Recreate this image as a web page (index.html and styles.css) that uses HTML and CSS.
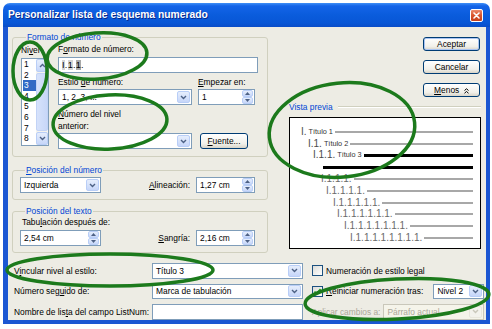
FILE: index.html
```html
<!DOCTYPE html>
<html lang="es">
<head>
    <meta charset="UTF-8">
    <meta name="viewport" content="width=device-width, initial-scale=1.0">
    <title>Personalizar lista de esquema numerado</title>
    <link rel="stylesheet" href="styles.css">
</head>
<body>
    <div class="window">
        <div class="titlebar">
            <span class="title">Personalizar lista de esquema numerado</span>
            <span class="close">
                <svg width="7" height="7" viewBox="0 0 7 7"><path d="M1 1l5 5M6 1l-5 5" stroke="#fff" stroke-width="1.6" stroke-linecap="round"/></svg>
            </span>
        </div>

        <div class="client">
            <div class="top">
                <div class="left">
                    <!-- Formato de número -->
                    <fieldset class="group g-formato">
                        <legend>Formato de número</legend>
                        <div class="formato">
                            <div class="nivel">
                                <div class="lbl">Ni<u>v</u>el</div>
                                <div class="listbox">
                                    <div class="items">
                                        <div>1</div>
                                        <div>2</div>
                                        <div class="sel">3</div>
                                        <div>4</div>
                                        <div>5</div>
                                        <div>6</div>
                                        <div>7</div>
                                        <div>8</div>
                                    </div>
                                    <div class="vscroll">
                                        <span class="sbtn"><svg width="7" height="5" viewBox="0 0 7 5"><path d="M1 4l2.5-2.5L6 4" fill="none" stroke="#4D6185" stroke-width="1.4"/></svg></span>
                                        <span class="thumb"></span>
                                        <span class="sbtn"><svg width="7" height="5" viewBox="0 0 7 5"><path d="M1 1l2.5 2.5L6 1" fill="none" stroke="#4D6185" stroke-width="1.4"/></svg></span>
                                    </div>
                                </div>
                            </div>

                            <div class="fields">
                                <div class="lbl">F<u>o</u>rmato de número:</div>
                                <div class="input fmt"><span class="fld">I</span>.<span class="fld">1</span>.<span class="fld cur">1</span>.</div>

                                <div class="frow r2">
                                    <div class="col-a">
                                        <div class="lbl">Estilo <u>d</u>e número:</div>
                                        <div class="combo">
                                            <span class="val">1, 2, 3, ...</span>
                                            <span class="drop"><svg width="7" height="5" viewBox="0 0 7 5"><path d="M1 1l2.5 2.5L6 1" fill="none" stroke="#4D6185" stroke-width="1.4"/></svg></span>
                                        </div>
                                    </div>
                                    <div class="col-b">
                                        <div class="lbl"><u>E</u>mpezar en:</div>
                                        <div class="spin">
                                            <span class="val">1</span>
                                            <span class="arrows">
                                                <span class="ar"><svg width="5" height="3" viewBox="0 0 5 3"><path d="M0 3h5L2.5 0z" fill="#4D6185"/></svg></span>
                                                <span class="ar"><svg width="5" height="3" viewBox="0 0 5 3"><path d="M0 0h5L2.5 3z" fill="#4D6185"/></svg></span>
                                            </span>
                                        </div>
                                    </div>
                                </div>

                                <div class="frow r3">
                                    <div class="col-a">
                                        <div class="lbl two"><u>N</u>úmero del nivel<br>anterior:</div>
                                        <div class="combo">
                                            <span class="val"></span>
                                            <span class="drop"><svg width="7" height="5" viewBox="0 0 7 5"><path d="M1 1l2.5 2.5L6 1" fill="none" stroke="#4D6185" stroke-width="1.4"/></svg></span>
                                        </div>
                                    </div>
                                    <button class="btn fuente"><u>F</u>uente...</button>
                                </div>
                            </div>
                        </div>
                    </fieldset>

                    <!-- Posición del número -->
                    <fieldset class="group g-numero">
                        <legend><u>P</u>osición del número</legend>
                        <div class="prow">
                            <div class="combo izq">
                                <span class="val">Izquierda</span>
                                <span class="drop"><svg width="7" height="5" viewBox="0 0 7 5"><path d="M1 1l2.5 2.5L6 1" fill="none" stroke="#4D6185" stroke-width="1.4"/></svg></span>
                            </div>
                            <span class="side-lbl"><u>A</u>lineación:</span>
                            <div class="spin cm">
                                <span class="val">1,27 cm</span>
                                <span class="arrows">
                                    <span class="ar"><svg width="5" height="3" viewBox="0 0 5 3"><path d="M0 3h5L2.5 0z" fill="#4D6185"/></svg></span>
                                    <span class="ar"><svg width="5" height="3" viewBox="0 0 5 3"><path d="M0 0h5L2.5 3z" fill="#4D6185"/></svg></span>
                                </span>
                            </div>
                        </div>
                    </fieldset>

                    <!-- Posición del texto -->
                    <fieldset class="group g-texto">
                        <legend>Posición del texto</legend>
                        <div class="prow">
                            <div class="tab-col">
                                <div class="lbl">Tabu<u>l</u>ación después de:</div>
                                <div class="spin izq">
                                    <span class="val">2,54 cm</span>
                                    <span class="arrows">
                                        <span class="ar"><svg width="5" height="3" viewBox="0 0 5 3"><path d="M0 3h5L2.5 0z" fill="#4D6185"/></svg></span>
                                        <span class="ar"><svg width="5" height="3" viewBox="0 0 5 3"><path d="M0 0h5L2.5 3z" fill="#4D6185"/></svg></span>
                                    </span>
                                </div>
                            </div>
                            <span class="side-lbl low"><u>S</u>angría:</span>
                            <div class="spin cm low">
                                <span class="val">2,16 cm</span>
                                <span class="arrows">
                                    <span class="ar"><svg width="5" height="3" viewBox="0 0 5 3"><path d="M0 3h5L2.5 0z" fill="#4D6185"/></svg></span>
                                    <span class="ar"><svg width="5" height="3" viewBox="0 0 5 3"><path d="M0 0h5L2.5 3z" fill="#4D6185"/></svg></span>
                                </span>
                            </div>
                        </div>
                    </fieldset>
                </div>

                <div class="right">
                    <div class="buttons">
                        <button class="btn default">Aceptar</button>
                        <button class="btn">Cancelar</button>
                        <button class="btn"><u>M</u>enos&nbsp;&nbsp;<svg class="menos" width="5" height="6" viewBox="0 0 5 6"><path d="M0.5 2.5L2.5 0.8 4.5 2.5M0.5 5.2L2.5 3.5 4.5 5.2" fill="none" stroke="#000" stroke-width="1"/></svg></button>
                    </div>

                    <div class="vp-head">
                        <span>Vista previa</span>
                        <span class="rule"></span>
                    </div>
                    <div class="preview">
                        <div class="pv l1"><span class="num dark">I.</span><span class="tit">Título 1</span><span class="line"></span></div>
                        <div class="pv l2"><span class="num dark">I.1.</span><span class="tit">Título 2</span><span class="line"></span></div>
                        <div class="pv l3"><span class="num dark">I.1.1.</span><span class="tit">Título 3</span><span class="line black"></span></div>
                        <div class="pv l4"><span class="line black"></span></div>
                        <div class="pv l5"><span class="num">I.1.1.1.</span><span class="line"></span></div>
                        <div class="pv l6"><span class="num">I.1.1.1.1.</span><span class="line"></span></div>
                        <div class="pv l7"><span class="num">I.1.1.1.1.1.</span><span class="line"></span></div>
                        <div class="pv l8"><span class="num">I.1.1.1.1.1.1.</span><span class="line"></span></div>
                        <div class="pv l9"><span class="num">I.1.1.1.1.1.1.1.</span><span class="line"></span></div>
                        <div class="pv l10"><span class="num">I.1.1.1.1.1.1.1.1.</span><span class="line"></span></div>
                    </div>
                </div>
            </div>

            <div class="bottom">
                <span class="blbl">V<u>i</u>ncular nivel al estilo:</span>
                <div class="combo">
                    <span class="val">Título 3</span>
                    <span class="drop"><svg width="7" height="5" viewBox="0 0 7 5"><path d="M1 1l2.5 2.5L6 1" fill="none" stroke="#4D6185" stroke-width="1.4"/></svg></span>
                </div>
                <div class="bright">
                    <span class="check"></span>
                    <span>Numeración de estilo legal</span>
                </div>

                <span class="blbl">Número seg<u>u</u>ido de:</span>
                <div class="combo">
                    <span class="val">Marca de tabulación</span>
                    <span class="drop"><svg width="7" height="5" viewBox="0 0 7 5"><path d="M1 1l2.5 2.5L6 1" fill="none" stroke="#4D6185" stroke-width="1.4"/></svg></span>
                </div>
                <div class="bright">
                    <span class="check on"><svg width="9" height="9" viewBox="0 0 9 9"><path d="M1.5 4.5l2 2 4-4.5" fill="none" stroke="#21A121" stroke-width="1.6"/></svg></span>
                    <span><u>R</u>einiciar numeración tras:</span>
                    <div class="combo nivel2">
                        <span class="val">Nivel 2</span>
                        <span class="drop"><svg width="7" height="5" viewBox="0 0 7 5"><path d="M1 1l2.5 2.5L6 1" fill="none" stroke="#4D6185" stroke-width="1.4"/></svg></span>
                    </div>
                </div>

                <span class="blbl">Nombre de lis<u>t</u>a del campo ListNum:</span>
                <div class="input"></div>
                <div class="bright">
                    <span class="disabled">Aplicar cambios a:</span>
                    <div class="combo off">
                        <span class="val">Párrafo actual</span>
                        <span class="drop"><svg width="7" height="5" viewBox="0 0 7 5"><path d="M1 1l2.5 2.5L6 1" fill="none" stroke="#C9C7BA" stroke-width="1.4"/></svg></span>
                    </div>
                </div>
            </div>
        </div>
    </div>

    <!-- marcas verdes de anotación -->
    <svg class="marks" width="492" height="329" viewBox="0 0 492 329">
        <g fill="none" stroke="#1C7A1C" stroke-width="3.5">
            <ellipse cx="30" cy="71" rx="17" ry="29"/>
            <ellipse cx="97" cy="56" rx="50" ry="23" transform="rotate(-4 97 56)"/>
            <ellipse cx="110" cy="122" rx="57" ry="27" transform="rotate(-3 110 122)"/>
            <ellipse cx="342" cy="130" rx="73" ry="47" transform="rotate(-6 342 130)"/>
            <ellipse cx="110" cy="270" rx="103" ry="16"/>
            <ellipse cx="397" cy="299" rx="92" ry="20" transform="rotate(-3 397 299)"/>
        </g>
    </svg>
</body>
</html>
```

FILE: styles.css
```css
* {
    box-sizing: border-box;
}

body {
    margin: 0;
    background-color: #fff;
    font-family: 'Liberation Sans', Arial, sans-serif;
    font-size: 8.4px;
    line-height: 10px;
    color: #000;
}

u {
    text-decoration-thickness: 1px;
    text-underline-offset: 1px;
}

.window {
    margin: 3px 0 0 3px;
    width: 487px;
    height: 321px;
    padding: 0 4px 4px 5px;
    border-radius: 7px 7px 0 0;
    background: linear-gradient(#3f8ff6 0, #1464e8 3px, #0a5cdc 12px, #0856d6 20px, #0a4cc8 24px, #1b56d2 24px);
}

.titlebar {
    height: 24px;
    display: flex;
    align-items: center;
    justify-content: space-between;
    padding-right: 3px;
}

.title {
    color: #fff;
    font-weight: bold;
    font-size: 10.3px;
    text-shadow: 1px 1px 0 #0b2a8a;
}

.close {
    width: 13px;
    height: 13px;
    border: 1px solid #fff;
    border-radius: 2px;
    background: linear-gradient(#ec8a6c, #d8532c 50%, #c4401c);
    display: flex;
    align-items: center;
    justify-content: center;
}

.client {
    height: 293px;
    background-color: #edece4;
    padding-top: 5px;
}

.top {
    display: flex;
    padding-left: 4px;
}

.left {
    width: 256px;
}

/* group boxes */
.group {
    margin: 0;
    padding: 0;
    border: 1px solid #d0d0bf;
    border-radius: 3px;
    min-width: 0;
}

.group legend {
    margin-left: 5px;
    padding: 0 1px;
    color: #0046d5;
    line-height: 10px;
}

.lbl {
    white-space: nowrap;
}

.lbl.two {
    line-height: 12px;
}

/* controls */
.input, .combo, .spin {
    height: 16px;
    border: 1px solid #7f9db9;
    background-color: #fff;
    display: flex;
    align-items: center;
}

.input {
    padding-left: 3px;
}

.val {
    flex: 1;
    padding-left: 3px;
    white-space: nowrap;
    overflow: hidden;
}

.drop {
    width: 13px;
    height: 12px;
    margin-right: 1px;
    border: 1px solid #b9cef7;
    border-radius: 2px;
    background: linear-gradient(#e6eefc, #c6d6f9);
    display: flex;
    align-items: center;
    justify-content: center;
}

.arrows {
    width: 11px;
    height: 14px;
    display: flex;
    flex-direction: column;
    margin-right: 1px;
}

.ar {
    flex: 1;
    border: 1px solid #b9cef7;
    border-radius: 2px;
    background: linear-gradient(#e6eefc, #c6d6f9);
    display: flex;
    align-items: center;
    justify-content: center;
}

.btn {
    font: inherit;
    line-height: 12px;
    color: #000;
    height: 14px;
    padding: 0;
    border: 1px solid #003c74;
    border-radius: 3px;
    background: linear-gradient(#fff, #f1f0ea 70%, #d8d4c8);
    text-align: center;
    white-space: nowrap;
}

.btn.default {
    box-shadow: inset 0 0 0 1px #a9c4f2;
}

.btn .menos {
    vertical-align: -1px;
}

/* formato de número */
.g-formato {
    padding: 0 0 7px 8px;
}

.formato {
    display: flex;
    gap: 9px;
    padding-top: 2px;
}

.nivel .lbl {
    margin-top: 1px;
}

.listbox {
    margin-top: 3px;
    width: 28px;
    height: 88px;
    border: 1px solid #7f9db9;
    background-color: #fff;
    display: flex;
    overflow: hidden;
}

.items {
    width: 14px;
    padding-left: 1px;
}

.items div {
    height: 10.6px;
    line-height: 10.6px;
    padding-left: 1px;
}

.items .sel {
    background-color: #316ac5;
    color: #fff;
}

.vscroll {
    width: 12px;
    display: flex;
    flex-direction: column;
    background-color: #f4f3ee;
}

.sbtn {
    height: 13px;
    border: 1px solid #b9cef7;
    border-radius: 2px;
    background: linear-gradient(#e6eefc, #c6d6f9);
    display: flex;
    align-items: center;
    justify-content: center;
}

.thumb {
    flex: 1;
    margin: 1px 0;
    border: 1px solid #c2d3f6;
    border-radius: 2px;
    background: linear-gradient(90deg, #d6e2fb, #c8d7f8);
}

.fields {
    width: 200px;
}

.input.fmt {
    margin-top: 3px;
    font-size: 9px;
    letter-spacing: 0.3px;
}

.fld {
    background-color: #d4d4d4;
}

.fld.cur {
    background-color: #a8a8a8;
}

.frow {
    display: flex;
    align-items: flex-end;
}

.frow.r2 {
    margin-top: 4px;
    gap: 6px;
}

.frow.r3 {
    margin-top: 3px;
    gap: 8px;
}

.col-a {
    width: 134px;
}

.col-b {
    width: 57px;
}

.col-a .combo, .col-b .spin {
    margin-top: 2px;
}

.r3 .col-a .combo {
    margin-top: 1px;
}

.fuente {
    width: 48px;
    height: 16px;
    line-height: 14px;
}

/* posición del número / del texto */
.g-numero {
    margin-top: 8px;
    padding: 2px 12px 6px 7px;
}

.g-texto {
    margin-top: 6px;
    padding: 1px 12px 6px 7px;
}

.prow {
    display: flex;
    align-items: center;
}

.izq {
    width: 81px;
}

.side-lbl {
    margin-left: auto;
    margin-right: 6px;
}

.spin.cm {
    width: 59px;
}

.g-texto .prow {
    align-items: flex-end;
}

.g-texto .lbl {
    padding-left: 2px;
}

.g-texto .spin {
    margin-top: 3px;
}

.side-lbl.low {
    line-height: 16px;
}

/* right column */
.right {
    width: 192px;
    margin-left: 21px;
    padding-top: 5px;
}

.buttons {
    display: flex;
    flex-direction: column;
    align-items: flex-end;
    gap: 9px;
    padding-right: 1px;
}

.buttons .btn {
    width: 57px;
}

.vp-head {
    margin-top: 5px;
    display: flex;
    align-items: center;
    gap: 5px;
    color: #0046d5;
}

.rule {
    flex: 1;
    height: 2px;
    border-top: 1px solid #d0d0bf;
    border-bottom: 1px solid #fff;
}

.preview {
    margin-top: 5px;
    height: 132px;
    border: 1px solid #000;
    background-color: #fff;
    padding: 8px 7px 0 0;
}

.pv {
    display: flex;
    align-items: center;
    height: 11.8px;
}

.num {
    font-size: 10px;
    color: #6a6a6a;
    white-space: nowrap;
}

.num.dark {
    color: #4a4a4a;
}

.tit {
    font-size: 7.3px;
    color: #333;
    margin-left: 2px;
    white-space: nowrap;
}

.line {
    flex: 1;
    height: 2px;
    margin-left: 2px;
    background-color: #a8a8a8;
}

.line.black {
    height: 3px;
    background-color: #000;
}

.l1 { padding-left: 11px; }
.l2 { padding-left: 18px; }
.l3 { padding-left: 23px; }
.l4 { padding-left: 31px; }
.l5 { padding-left: 31px; }
.l6 { padding-left: 36px; }
.l7 { padding-left: 43px; }
.l8 { padding-left: 47px; }
.l9 { padding-left: 54px; }
.l10 { padding-left: 60px; }

/* bottom rows */
.bottom {
    margin-top: 10px;
    padding-left: 6px;
    display: grid;
    grid-template-columns: 138px 151px 1fr;
    grid-auto-rows: 15.5px;
    row-gap: 5px;
    align-items: center;
}

.bottom .combo, .bottom .input {
    height: 15.5px;
}

.blbl {
    white-space: nowrap;
}

.bright {
    display: flex;
    align-items: center;
    gap: 3px;
    padding-left: 9px;
    padding-right: 3px;
    white-space: nowrap;
}

.check {
    width: 11px;
    height: 11px;
    border: 1px solid #1c5180;
    background: linear-gradient(135deg, #dcdcd7, #fff);
    display: flex;
    align-items: center;
    justify-content: center;
}

.combo.nivel2 {
    width: 51px;
    margin-left: auto;
}

.disabled {
    color: #aca899;
}

.combo.off {
    width: 101px;
    margin-left: auto;
    border-color: #c9c7ba;
    background-color: #f5f4ea;
    color: #aca899;
}

.combo.off .drop {
    border-color: #e8e6dc;
    background: #f3f2ec;
}

.marks {
    position: absolute;
    top: 0;
    left: 0;
    pointer-events: none;
}
```
